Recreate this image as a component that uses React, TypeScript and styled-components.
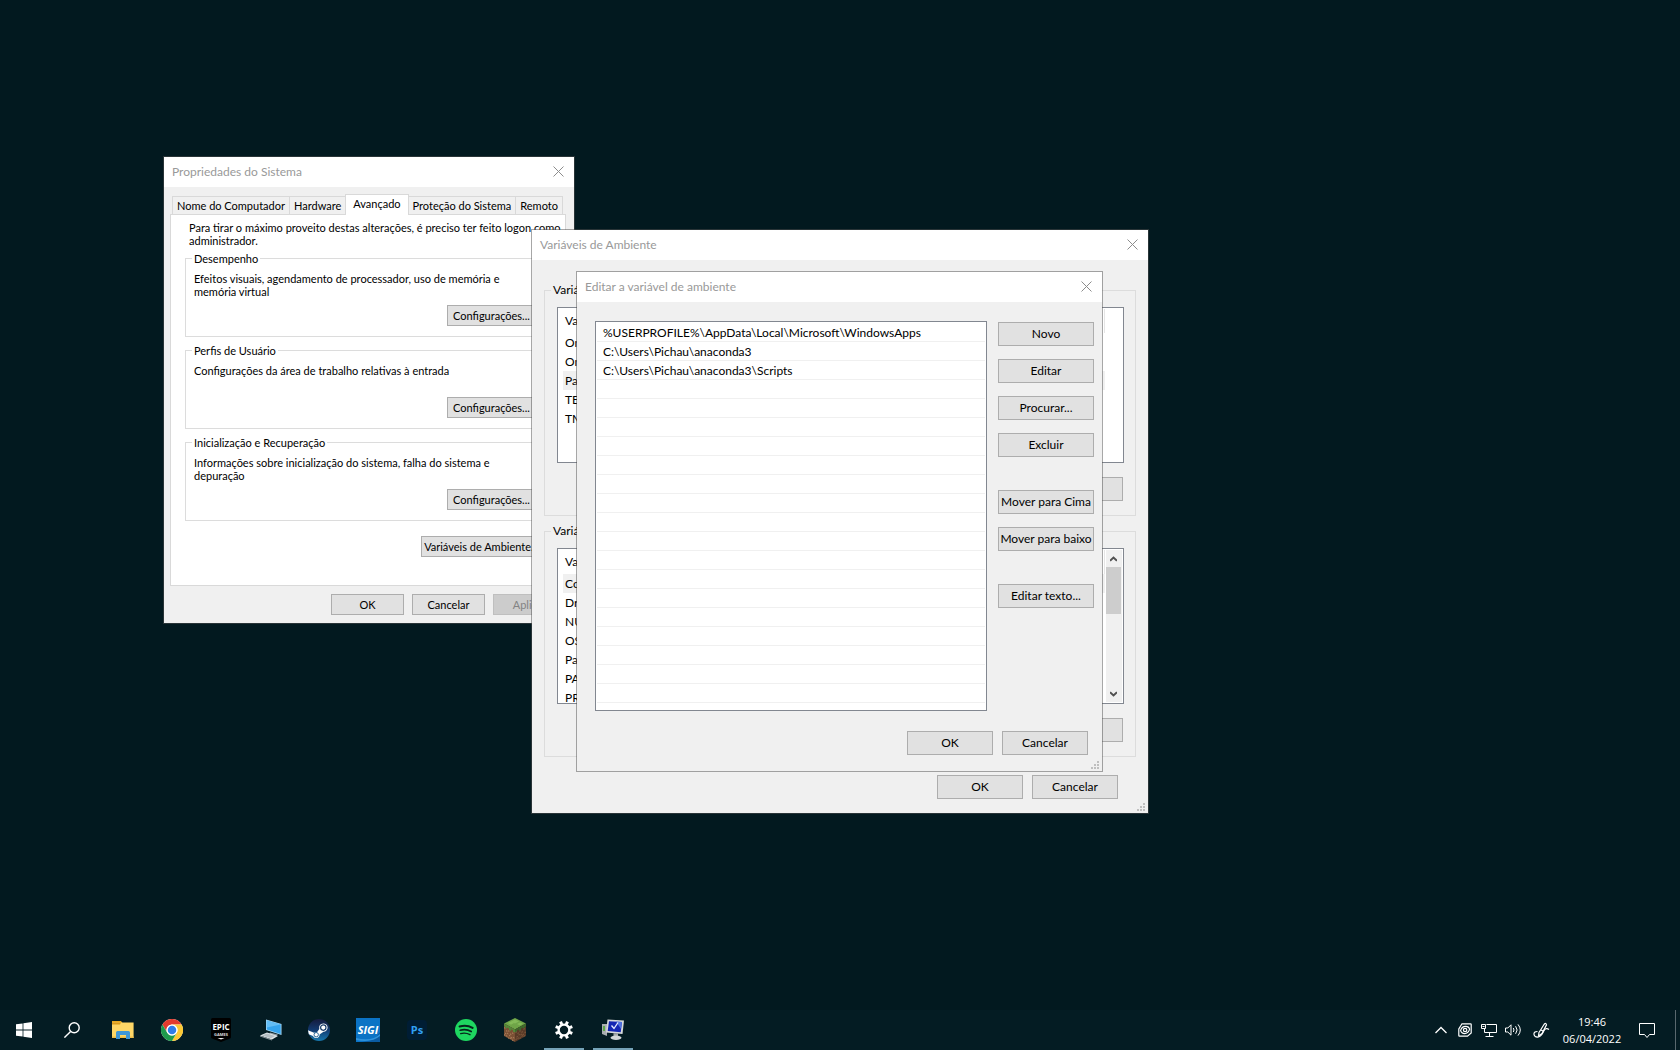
import React from "react";
import styled, { createGlobalStyle, css } from "styled-components";

const GlobalStyle = createGlobalStyle`
  * { box-sizing: border-box; }
  body {
    margin: 0;
    background: #02191f;
    color: #000;
    font-family: Lato, "Open Sans", sans-serif;
    font-size: 12px;
    line-height: 16px;
    overflow: hidden;
  }
  button { font: inherit; color: inherit; margin: 0; cursor: default; }
  svg { display: block; }
`;

/* ---------- Desktop and windows ---------- */

const Screen = styled.div`
  display: flex;
  flex-direction: column;
  height: 100vh;
`;

const Desktop = styled.main`
  position: relative;
  flex: 1;
`;

const Frame = styled.section<{ $x: number; $y: number; $w: number }>`
  position: absolute;
  left: ${(p) => p.$x}px;
  top: ${(p) => p.$y}px;
  width: ${(p) => p.$w}px;
  border: 1px solid rgba(80, 80, 80, 0.5);
`;

const TitleBar = styled.header`
  display: flex;
  align-items: center;
  justify-content: space-between;
  height: 30px;
  padding-left: 8px;
  background: #fff;
  color: #999;
`;

const Title = styled.h2`
  margin: 0;
  font-size: 12px;
  font-weight: 400;
`;

const CloseButton = styled.button`
  display: flex;
  align-items: center;
  justify-content: center;
  width: 31px;
  height: 28px;
  padding: 0 0 1px;
  border: 0;
  background: none;
  color: #8c8c8c;
`;

const GripCorner = styled.svg`
  position: absolute;
  right: 3px;
  bottom: 2px;
`;

const Client = styled.div<{ $pad: string }>`
  padding: ${(p) => p.$pad};
  background: #f0f0f0;
`;

function Win(props: {
  title: string;
  x: number;
  y: number;
  w: number;
  pad: string;
  grip?: boolean;
  children: React.ReactNode;
}) {
  return (
    <Frame $x={props.x} $y={props.y} $w={props.w} aria-label={props.title}>
      <TitleBar>
        <Title>{props.title}</Title>
        <CloseButton aria-label="Fechar">
          <svg width="11" height="11" viewBox="0 0 11 11" stroke="currentColor" fill="none">
            <path d="M.5 .5l10 10M10.5 .5l-10 10" />
          </svg>
        </CloseButton>
      </TitleBar>
      <Client $pad={props.pad}>{props.children}</Client>
      {props.grip && (
        <GripCorner width="8" height="8" viewBox="0 0 8 8" fill="#bfbfbf">
          <path d="M6 0h2v2H6zM3 3h2v2H3zM6 3h2v2H6zM0 6h2v2H0zM3 6h2v2H3zM6 6h2v2H6z" />
        </GripCorner>
      )}
    </Frame>
  );
}

/* ---------- Shared controls ---------- */

const Button = styled.button<{ $w: number; $small?: boolean }>`
  flex: none;
  width: ${(p) => p.$w}px;
  height: ${(p) => (p.$small ? 21 : 24)}px;
  padding: 0;
  border: 1px solid #adadad;
  background: #e1e1e1;
  text-align: center;
  white-space: nowrap;
  line-height: ${(p) => (p.$small ? 19 : 22)}px;
  &:disabled {
    border-color: #bfbfbf;
    background: #ccc;
    color: #838383;
  }
`;

const Group = styled.fieldset<{ $right?: number }>`
  min-width: 0;
  margin: 0 ${(p) => p.$right ?? 0}px 7px 0;
  padding: 0 6px;
  border: 1px solid #dcdcdc;
`;

const Legend = styled.legend`
  padding: 0 2px;
`;

const ButtonRow = styled.div<{ $gap: number; $pad?: string }>`
  display: flex;
  justify-content: flex-end;
  gap: ${(p) => p.$gap}px;
  padding: ${(p) => p.$pad ?? "0"};
`;

/* ---------- System properties ---------- */

const SmallText = styled.div`
  font-size: 11px;
  line-height: 13px;
`;

const Tabs = styled.div`
  display: flex;
  align-items: flex-end;
  padding-left: 2px;
`;

const Tab = styled.button<{ $active?: boolean }>`
  height: 18px;
  margin-right: -1px;
  padding: 0 4px;
  border: 1px solid #d9d9d9;
  border-bottom: 0;
  background: #f0f0f0;
  line-height: 17px;
  white-space: nowrap;
  ${(p) =>
    p.$active &&
    css`
      position: relative;
      z-index: 1;
      height: 21px;
      margin-bottom: -1px;
      padding: 0 7px 3px;
      background: #fff;
    `}
`;

const Pane = styled.div`
  display: flex;
  flex-direction: column;
  padding: 6px 0 28px 14px;
  border: 1px solid #d9d9d9;
  background: #fff;
`;

const Intro = styled.p`
  margin: 0 0 5px 4px;
`;

const GroupBody = styled.div`
  display: flex;
  flex-direction: column;
  justify-content: space-between;
  align-items: flex-end;
  min-height: 71px;
  padding: 7px 9px 10px 2px;
`;

const Description = styled.p`
  align-self: flex-start;
  max-width: 320px;
  margin: 0;
`;

const sections = [
  ["Desempenho", "Efeitos visuais, agendamento de processador, uso de memória e memória virtual"],
  ["Perfis de Usuário", "Configurações da área de trabalho relativas à entrada"],
  ["Inicialização e Recuperação", "Informações sobre inicialização do sistema, falha do sistema e depuração"],
];

const tabs = ["Nome do Computador", "Hardware", "Avançado", "Proteção do Sistema", "Remoto"];

function SystemProperties() {
  return (
    <Win title="Propriedades do Sistema" x={163} y={156} w={412} pad="7px 8px 8px 6px">
      <SmallText>
        <Tabs role="tablist">
          {tabs.map((t) => (
            <Tab key={t} role="tab" aria-selected={t === "Avançado"} $active={t === "Avançado"}>
              {t}
            </Tab>
          ))}
        </Tabs>
        <Pane role="tabpanel">
          <Intro>
            Para tirar o máximo proveito destas alterações, é preciso ter feito logon como administrador.
          </Intro>
          {sections.map(([name, text]) => (
            <Group key={name} $right={13}>
              <Legend>{name}</Legend>
              <GroupBody>
                <Description>{text}</Description>
                <Button $w={89} $small>
                  Configurações...
                </Button>
              </GroupBody>
            </Group>
          ))}
          <ButtonRow $gap={0} $pad="8px 23px 0 0">
            <Button $w={121} $small>
              Variáveis de Ambiente...
            </Button>
          </ButtonRow>
        </Pane>
        <ButtonRow $gap={8} $pad="8px 0 0">
          <Button $w={73} $small>OK</Button>
          <Button $w={73} $small>Cancelar</Button>
          <Button $w={73} $small disabled>Aplicar</Button>
        </ButtonRow>
      </SmallText>
    </Win>
  );
}

/* ---------- Environment variables ---------- */

const VarBody = styled.div`
  padding: 9px 5px 14px 6px;
`;

const VarList = styled.div`
  display: flex;
  justify-content: space-between;
  height: 156px;
  margin-bottom: 14px;
  padding: 1px 1px 1px 5px;
  border: 1px solid #828790;
  background: #fff;
  overflow: hidden;
`;

const VarTable = styled.table`
  flex: none;
  align-self: flex-start;
  width: 542px;
  border-collapse: collapse;
  table-layout: fixed;
`;

const HeadCell = styled.th`
  height: 24px;
  padding: 0 2px;
  border-right: 1px solid #e5e5e5;
  font-weight: 400;
  text-align: left;
`;

const Cell = styled.td`
  height: 19px;
  padding: 0 2px;
  white-space: nowrap;
`;

const VarRow = styled.tr<{ $selected: boolean }>`
  background: ${(p) => (p.$selected ? "#f0f0f0" : "#fff")};
`;

const ScrollBar = styled.div`
  display: flex;
  flex-direction: column;
  width: 16px;
  background: #f0f0f0;
`;

const ScrollArrow = styled.button`
  display: flex;
  align-items: center;
  justify-content: center;
  width: 15px;
  height: 17px;
  padding: 0;
  border: 0;
  background: none;
`;

const ScrollTrack = styled.div`
  flex: 1;
`;

const ScrollThumb = styled.div`
  width: 15px;
  height: 47px;
  background: #cdcdcd;
`;

function Variables(props: { label: string; names: string[]; selected: string; scroll?: boolean }) {
  return (
    <Group>
      <Legend>{props.label}</Legend>
      <VarBody>
        <VarList>
          <VarTable>
            <thead>
              <tr>
                <HeadCell>Variável</HeadCell>
                <HeadCell>Valor</HeadCell>
              </tr>
            </thead>
            <tbody>
              {props.names.map((n) => (
                <VarRow key={n} $selected={n === props.selected}>
                  <Cell>{n}</Cell>
                  <Cell />
                </VarRow>
              ))}
            </tbody>
          </VarTable>
          {props.scroll && (
            <ScrollBar>
              <ScrollArrow aria-label="Rolar para cima">
                <svg width="7" height="6" viewBox="0 0 7 6" fill="none" stroke="#505050" strokeWidth="2">
                  <path d="M0 4.8L3.5 1.5 7 4.8" />
                </svg>
              </ScrollArrow>
              <ScrollTrack>
                <ScrollThumb />
              </ScrollTrack>
              <ScrollArrow aria-label="Rolar para baixo">
                <svg width="7" height="6" viewBox="0 0 7 6" fill="none" stroke="#505050" strokeWidth="2">
                  <path d="M0 1.2L3.5 4.5 7 1.2" />
                </svg>
              </ScrollArrow>
            </ScrollBar>
          )}
        </VarList>
        <ButtonRow $gap={9} $pad="0 1px 0 0">
          <Button $w={86}>Novo...</Button>
          <Button $w={86}>Editar...</Button>
          <Button $w={86}>Excluir</Button>
        </ButtonRow>
      </VarBody>
    </Group>
  );
}

function EnvironmentVariables() {
  return (
    <Win title="Variáveis de Ambiente" x={531} y={229} w={618} pad="22px 12px 14px" grip>
      <Variables
        label="Variáveis de usuário para Pichau"
        names={["OneDrive", "OneDriveConsumer", "Path", "TEMP", "TMP"]}
        selected="Path"
      />
      <Variables
        label="Variáveis do sistema"
        names={["ComSpec", "DriverData", "NUMBER_OF_PROCESSORS", "OS", "Path", "PATHEXT", "PROCESSOR_LEVEL"]}
        selected="ComSpec"
        scroll
      />
      <ButtonRow $gap={9} $pad="11px 18px 0 0">
        <Button $w={86}>OK</Button>
        <Button $w={86}>Cancelar</Button>
      </ButtonRow>
    </Win>
  );
}

/* ---------- Edit variable ---------- */

const EditBody = styled.div`
  display: flex;
  align-items: flex-start;
  gap: 11px;
`;

const PathList = styled.ul`
  flex: 1;
  height: 390px;
  margin: 0;
  padding: 1px;
  border: 1px solid #828790;
  background: #fff;
  list-style: none;
  overflow: hidden;
`;

const PathItem = styled.li`
  height: 19px;
  padding-left: 6px;
  border-bottom: 1px solid #f0f0f0;
  line-height: 19px;
`;

const Actions = styled.div`
  display: flex;
  flex-direction: column;
  gap: 33px;
  padding-top: 1px;
`;

const ActionSet = styled.div`
  display: flex;
  flex-direction: column;
  gap: 13px;
`;

const paths = [
  "%USERPROFILE%\\AppData\\Local\\Microsoft\\WindowsApps",
  "C:\\Users\\Pichau\\anaconda3",
  "C:\\Users\\Pichau\\anaconda3\\Scripts",
];

const actions = [
  ["Novo", "Editar", "Procurar...", "Excluir"],
  ["Mover para Cima", "Mover para baixo"],
  ["Editar texto..."],
];

function EditVariable() {
  return (
    <Win title="Editar a variável de ambiente" x={576} y={271} w={527} pad="19px 8px 16px 18px" grip>
      <EditBody>
        <PathList>
          {Array.from({ length: 20 }, (_, i) => (
            <PathItem key={i}>{paths[i]}</PathItem>
          ))}
        </PathList>
        <Actions>
          {actions.map((set) => (
            <ActionSet key={set[0]}>
              {set.map((a) => (
                <Button key={a} $w={96}>
                  {a}
                </Button>
              ))}
            </ActionSet>
          ))}
        </Actions>
      </EditBody>
      <ButtonRow $gap={9} $pad="20px 6px 0 0">
        <Button $w={86}>OK</Button>
        <Button $w={86}>Cancelar</Button>
      </ButtonRow>
    </Win>
  );
}

/* ---------- Taskbar ---------- */

const TaskBar = styled.footer`
  display: flex;
  justify-content: space-between;
  height: 40px;
  background: #041c23;
  color: #fff;
`;

const TaskGroup = styled.div`
  display: flex;
`;

const Apps = styled.div`
  display: flex;
  gap: 1px;
  margin-left: 3px;
`;

const TaskButton = styled.button<{ $w?: number; $open?: boolean }>`
  display: flex;
  align-items: center;
  justify-content: center;
  width: ${(p) => p.$w ?? 48}px;
  height: 40px;
  padding: 0;
  border: 0;
  background: ${(p) =>
    p.$open ? "linear-gradient(#76a3b8, #76a3b8) center bottom / 40px 2px no-repeat" : "none"};
`;

const Clock = styled.time`
  display: flex;
  flex-direction: column;
  justify-content: center;
  width: 70px;
  font-family: "Open Sans", sans-serif;
  font-size: 11px;
  line-height: 17px;
  text-align: center;
`;

const ShowDesktop = styled.button`
  width: 5px;
  margin-left: 8px;
  padding: 0;
  border: 0;
  border-left: 1px solid #59686e;
  background: none;
`;

const StartIcon = () => (
  <svg width="16" height="16" viewBox="0 0 16 16" fill="#fff">
    <path d="M0 2.3L6.6 1.4V7.6H0zM7.4 1.2L16 0V7.6H7.4zM0 8.4H6.6V14.6L0 13.7zM7.4 8.4H16V16L7.4 14.8z" />
  </svg>
);

const SearchIcon = () => (
  <svg width="16" height="16" viewBox="0 0 16 16" fill="none" stroke="#fff" strokeWidth="1.4">
    <circle cx="10.2" cy="5.8" r="5" />
    <path d="M6.6 9.4L.4 15.6" />
  </svg>
);

const ExplorerIcon = () => (
  <svg width="22" height="18" viewBox="0 0 22 18">
    <path d="M0 0h9l1.5 2H0z" fill="#e9a820" />
    <path d="M0 1.5h21.6V17H0z" fill="#ffd767" />
    <path d="M0 1.5h9l-1 2H0z" fill="#d99a1c" />
    <path d="M0 15.5h21.6V17H0z" fill="#eebb48" />
    <path d="M4 18v-6.5q0-1.5 1.5-1.5h11q1.5 0 1.5 1.5V18h-4v-4H8v4z" fill="#3f97d8" />
  </svg>
);

const ChromeIcon = () => (
  <svg width="22" height="22" viewBox="0 0 48 48">
    <circle cx="24" cy="24" r="24" fill="#fff" />
    <path d="M3.2 12A24 24 0 0 1 44.8 12H24A12 12 0 0 0 13.6 30z" fill="#e33b2e" />
    <path d="M44.8 12A24 24 0 0 1 24 48L34.4 30A12 12 0 0 0 24 12z" fill="#fcc934" />
    <path d="M24 48A24 24 0 0 1 3.2 12L13.6 30A12 12 0 0 0 34.4 30z" fill="#1e9a4d" />
    <circle cx="24" cy="24" r="12" fill="#fff" />
    <circle cx="24" cy="24" r="9.3" fill="#2f7de9" />
  </svg>
);

const EpicIcon = () => (
  <svg width="20" height="24" viewBox="0 0 20 24">
    <path d="M1.5 0h17Q20 0 20 1.5V19q0 1-1 1.5L10 24 1 20.5Q0 20 0 19V1.5Q0 0 1.5 0z" fill="#000" />
    <text x="10" y="12" textAnchor="middle" fill="#fff" fontFamily="Open Sans, sans-serif" fontWeight="700" fontSize="8">EPIC</text>
    <text x="10" y="17.5" textAnchor="middle" fill="#ddd" fontFamily="Open Sans, sans-serif" fontWeight="700" fontSize="4">GAMES</text>
    <path d="M6.5 20h7L10 21.6z" fill="#eee" />
  </svg>
);

const ComputerIcon = () => (
  <svg width="24" height="24" viewBox="0 0 24 24">
    <path d="M8 1.5L23.5 6v11L8 12z" fill="#a9dbf8" />
    <path d="M8.8 2.6l13.9 4v9.3L8.8 11.4z" fill="#35a4ee" />
    <path d="M8.8 2.6l13.9 4-13.9 3z" fill="#63bdf5" />
    <path d="M12 14.5l8 2-2 2-7-2z" fill="#8b969c" />
    <path d="M2 17.5l7-3 11 3.5-6 3.5z" fill="#dfe4e6" />
    <path d="M4 17.6l5-2.1 8 2.5-4 2.2z" fill="#b5bec3" />
    <path d="M2 17.5l12 4v1l-12-4z" fill="#8b969c" />
  </svg>
);

const SteamIcon = () => (
  <svg width="22" height="22" viewBox="0 0 22 22">
    <defs>
      <linearGradient id="steam" x1="0" y1="0" x2="0" y2="1">
        <stop offset="0" stopColor="#151b3d" />
        <stop offset=".5" stopColor="#123a70" />
        <stop offset="1" stopColor="#1778ae" />
      </linearGradient>
    </defs>
    <circle cx="11" cy="11" r="11" fill="url(#steam)" />
    <path d="M0 11.3l6 2.5q1.4-.8 2.8-.4L11.3 10q-.8-5.5 4-5.6a4.2 4.2 0 0 1 .2 8.4L11.6 15.5A3.5 3.5 0 0 1 4.9 17L.8 15.3z" fill="#fff" />
    <circle cx="15.3" cy="8.6" r="2.7" fill="none" stroke="#173a69" strokeWidth="1.2" />
    <circle cx="8.2" cy="15.7" r="2.2" fill="none" stroke="#175a90" strokeWidth=".9" />
  </svg>
);

const SigiIcon = () => (
  <svg width="24" height="24" viewBox="0 0 24 24">
    <path d="M0 0h24v24H0z" fill="#0b73c5" />
    <path d="M24 14v10H6Q19 23 24 14z" fill="#0a5ba2" />
    <path d="M0 20Q16 24 24 16v2Q16 25 0 22z" fill="#2f93dc" />
    <text x="12" y="16" textAnchor="middle" fill="#fff" fontFamily="Open Sans, sans-serif" fontStyle="italic" fontWeight="700" fontSize="11">SIGI</text>
  </svg>
);

const PhotoshopIcon = () => (
  <svg width="22" height="22" viewBox="0 0 22 22">
    <rect x="1" y="1" width="20" height="20" rx="4" fill="#001d34" />
    <text x="11" y="15" textAnchor="middle" fill="#31a0f5" fontFamily="Open Sans, sans-serif" fontWeight="700" fontSize="11">Ps</text>
  </svg>
);

const SpotifyIcon = () => (
  <svg width="22" height="22" viewBox="0 0 22 22" fill="none" stroke="#06251c" strokeLinecap="round">
    <circle cx="11" cy="11" r="11" fill="#1ed760" stroke="none" />
    <path d="M4.6 7.5q7-2 13 1.3" strokeWidth="2.1" />
    <path d="M5.2 11.2q6-1.7 11 1.3" strokeWidth="1.7" />
    <path d="M5.7 14.6q5-1.3 9.3 1.1" strokeWidth="1.4" />
  </svg>
);

const speckles = [
  [0, 4], [2, 6], [4, 5], [6, 7], [8, 5], [1, 9], [3, 8], [5, 9], [7, 10], [9, 9], [0, 11], [2, 11], [4, 12], [6, 11], [8, 12],
];

const MinecraftIcon = () => (
  <svg width="24" height="24" viewBox="0 0 24 24">
    <path d="M12 0L23 5.5 12 11.5 1 5.5z" fill="#6fa548" />
    <path d="M12 1.5l4 2-4 2-4-2zM5 5l3-1.5 3 1.5-3 1.7zM14 6l3-1.5 3 1.2-3 1.8z" fill="#83ba58" />
    <path d="M1 5.5l11 6V24L1 18z" fill="#7a5034" />
    <path d="M23 5.5l-11 6V24l11-6z" fill="#593a27" />
    <path d="M1 5.5l11 6v3l-2-.8v-1.4l-2-1v1.8l-2-1v-1.5l-2-1v1.5L1 8z" fill="#548739" />
    <path d="M23 5.5l-11 6v3l2-.8v-1.4l2-1v1.8l2-1v-1.5l2-1v1.5L23 8z" fill="#3d6a2b" />
    <g fill="#a87b58" transform="matrix(1 .54 0 1 1 5)">
      {speckles.map(([x, y]) => (
        <path key={`${x}-${y}`} d={`M${x} ${y}h1.3v1.2h-1.3z`} />
      ))}
    </g>
    <g fill="#815a3e" transform="matrix(1 -.54 0 1 12.5 11)">
      {speckles.map(([x, y]) => (
        <path key={`${x}-${y}`} d={`M${x} ${y - 1}h1.3v1.2h-1.3z`} />
      ))}
    </g>
  </svg>
);

const GearIcon = () => (
  <svg width="18" height="18" viewBox="0 0 18 18" fill="none" stroke="#fff">
    <circle cx="9" cy="9" r="5.4" strokeWidth="2.4" />
    {[22.5, 67.5, 112.5, 157.5, 202.5, 247.5, 292.5, 337.5].map((a) => (
      <path key={a} d="M9 0v3" strokeWidth="3" transform={`rotate(${a} 9 9)`} />
    ))}
  </svg>
);

const SystemIcon = () => (
  <svg width="24" height="24" viewBox="0 0 24 24">
    <path d="M1 6h5v12l-5-2z" fill="#a9aeb1" />
    <path d="M2 8h2v5H2z" fill="#5ca548" />
    <path d="M6.5 1.5L23 2.5 21.500 16 5 14.500z" fill="#d6d8da" />
    <path d="M8 3.200l13 .8-1.300 10.300L6.700 13z" fill="#1426b4" />
    <path d="M15 3.600l6 .4-1 7z" fill="#5273e0" />
    <path d="M10.500 7.500l2.500 3L17 4.500" fill="none" stroke="#e8ecff" strokeWidth="1.300" />
    <path d="M12.500 15.200h4.500v4h-4.500z" fill="#a4a8ab" />
    <ellipse cx="15" cy="19.800" rx="5.500" ry="2.200" fill="#d3d6d8" />
  </svg>
);

const ChevronIcon = () => (
  <svg width="12" height="8" viewBox="0 0 12 8" fill="none" stroke="#fff" strokeWidth="1.3">
    <path d="M.5 7L6 1.5 11.5 7" />
  </svg>
);

const SwirlIcon = () => (
  <svg width="14" height="14" viewBox="0 0 14 14" fill="none" stroke="#fff" strokeWidth="1.2">
    <path d="M.8 6V12.500Q.8 13.200 1.500 13.200H9.500L13.200 10V1.500Q13.200.8 12.500.8H4z" />
    <path d="M2.600 7.400Q4 3.400 7.500 3.400T11.600 6.400Q10 10.600 6.700 10.600T2.600 7.400z" />
    <circle cx="7.100" cy="7" r="1.700" />
  </svg>
);

const NetworkIcon = () => (
  <svg width="17" height="14" viewBox="0 0 17 14" fill="none" stroke="#fff">
    <path d="M5.5 1.5h10v8H3.5V6M8.5 9.5v3.5M4.500 13.5h8" />
    <path d="M.5 1.500h4v4H.5zM1.500 3.500h2" />
  </svg>
);

const SpeakerIcon = () => (
  <svg width="17" height="14" viewBox="0 0 17 14" fill="none" stroke="#fff">
    <path d="M.5 5h2.3L6 1.8v10.400L2.8 9H.5z" />
    <path d="M8.3 5q1.4 2 0 4M10.6 3.2q3 3.8 0 7.6M13 1.4q4.6 5.6 0 11.2" />
  </svg>
);

const PenIcon = () => (
  <svg width="17" height="17" viewBox="0 0 17 17" fill="none" stroke="#fff" strokeWidth="1.2">
    <path d="M6 10.5L11 2.500Q13 .3 13.500 2.800L9 11.500 5.5 14z" />
    <path d="M4.500 9.500Q.5 9.500 1 12.500T5.500 15Q8.500 14 10.500 9.500T16 7.500M8 8l3 1.500" />
  </svg>
);

const NotificationIcon = () => (
  <svg width="17" height="17" viewBox="0 0 17 17" fill="none" stroke="#fff">
    <path d="M.5 1.500h15v11H10.500L8 15.500 5.500 12.500H.5z" />
  </svg>
);

const apps: [string, () => React.JSX.Element, boolean?][] = [
  ["Explorador de Arquivos", ExplorerIcon],
  ["Google Chrome", ChromeIcon],
  ["Epic Games", EpicIcon],
  ["Este Computador", ComputerIcon],
  ["Steam", SteamIcon],
  ["SIGI", SigiIcon],
  ["Photoshop", PhotoshopIcon],
  ["Spotify", SpotifyIcon],
  ["Minecraft", MinecraftIcon],
  ["Configurações", GearIcon, true],
  ["Propriedades do Sistema", SystemIcon, true],
];

const tray: [string, () => React.JSX.Element, number][] = [
  ["Mostrar ícones ocultos", ChevronIcon, 24],
  ["Gráficos", SwirlIcon, 24],
  ["Rede", NetworkIcon, 24],
  ["Volume", SpeakerIcon, 24],
  ["Caneta", PenIcon, 32],
];

export default function App() {
  return (
    <Screen>
      <GlobalStyle />
      <Desktop>
        <SystemProperties />
        <EnvironmentVariables />
        <EditVariable />
      </Desktop>
      <TaskBar>
        <TaskGroup>
          <TaskButton aria-label="Iniciar">
            <StartIcon />
          </TaskButton>
          <TaskButton aria-label="Pesquisar">
            <SearchIcon />
          </TaskButton>
          <Apps>
            {apps.map(([name, Icon, open]) => (
              <TaskButton key={name} aria-label={name} $open={open}>
                <Icon />
              </TaskButton>
            ))}
          </Apps>
        </TaskGroup>
        <TaskGroup>
          {tray.map(([name, Icon, w]) => (
            <TaskButton key={name} aria-label={name} $w={w}>
              <Icon />
            </TaskButton>
          ))}
          <Clock dateTime="2022-04-06T19:46">
            <span>19:46</span>
            <span>06/04/2022</span>
          </Clock>
          <TaskButton aria-label="Notificações" $w={40}>
            <NotificationIcon />
          </TaskButton>
          <ShowDesktop aria-label="Mostrar área de trabalho" />
        </TaskGroup>
      </TaskBar>
    </Screen>
  );
}
